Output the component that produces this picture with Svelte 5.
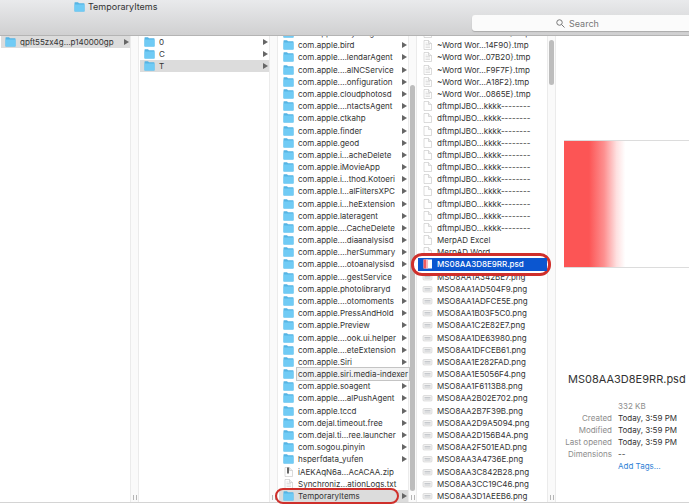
<script lang="ts">
	type Kind = 'folder' | 'text' | 'blank' | 'image' | 'psd' | 'zip';
	type Item = { name: string; kind: Kind; state?: string; ring?: string; tip?: string };

	const make = (kind: Kind, names: string[]): Item[] => names.map((name) => ({ name, kind }));

	const root: Item[] = [{ name: 'qpft55zx4g…p140000gp', kind: 'folder', state: 'path' }];

	const groups: Item[] = [
		...make('folder', ['0', 'C']),
		{ name: 'T', kind: 'folder', state: 'path' }
	];

	const caches: Item[] = [
		...make('folder', [
			'com.apple.…ayUIAgent',
			'com.apple.bird',
			'com.apple.…lendarAgent',
			'com.apple.…alNCService',
			'com.apple.…onfiguration',
			'com.apple.cloudphotosd',
			'com.apple.…ntactsAgent',
			'com.apple.ctkahp',
			'com.apple.finder',
			'com.apple.geod',
			'com.apple.i…acheDelete',
			'com.apple.iMovieApp',
			'com.apple.i…thod.Kotoeri',
			'com.apple.I…alFiltersXPC',
			'com.apple.i…heExtension',
			'com.apple.lateragent',
			'com.apple.…CacheDelete',
			'com.apple.…diaanalysisd',
			'com.apple.…herSummary',
			'com.apple.…otoanalysisd',
			'com.apple.…gestService',
			'com.apple.photolibraryd',
			'com.apple.…otomoments',
			'com.apple.PressAndHold',
			'com.apple.Preview',
			'com.apple.…ook.ui.helper',
			'com.apple.…eteExtension',
			'com.apple.Siri'
		]),
		{ name: '', kind: 'folder', tip: 'com.apple.siri.media-indexer' },
		...make('folder', [
			'com.apple.soagent',
			'com.apple.…alPushAgent',
			'com.apple.tccd',
			'com.dejal.timeout.free',
			'com.dejal.ti…ree.launcher',
			'com.sogou.pinyin',
			'hsperfdata_yufen'
		]),
		{ name: 'iAEKAqN6a…AcACAA.zip', kind: 'zip' },
		{ name: 'Synchroniz…ationLogs.txt', kind: 'text' },
		{ name: 'TemporaryItems', kind: 'folder', state: 'path', ring: 'folder-ring' }
	];

	const files: Item[] = [
		...make('text', [
			'~Word Wor…0D3A1}.tmp',
			'~Word Wor…14F90}.tmp',
			'~Word Wor…07B20}.tmp',
			'~Word Wor…F9F7F}.tmp',
			'~Word Wor…A18F2}.tmp',
			'~Word Wor…0865E}.tmp'
		]),
		...make('blank', Array(11).fill('dftmpIJBO…kkkk--------')),
		...make('blank', ['MerpAD Excel', 'MerpAD Word']),
		{ name: 'MS08AA3D8E9RR.psd', kind: 'psd', state: 'selected', ring: 'file-ring' },
		...make('image', [
			'MSO8AA1A342BE7.png',
			'MSO8AA1AD504F9.png',
			'MSO8AA1ADFCE5E.png',
			'MSO8AA1B03F5C0.png',
			'MSO8AA1C2E82E7.png',
			'MSO8AA1DE63980.png',
			'MSO8AA1DFCEB61.png',
			'MSO8AA1E282FAD.png',
			'MSO8AA1E5056F4.png',
			'MSO8AA1F6113B8.png',
			'MSO8AA2B02E702.png',
			'MSO8AA2B7F39B.png',
			'MSO8AA2D9A5094.png',
			'MSO8AA2D156B4A.png',
			'MSO8AA2F501EAD.png',
			'MSO8AA3A4736E.png',
			'MSO8AA3C842B28.png',
			'MSO8AA3CC19C46.png',
			'MSO8AA3D1AEEB6.png'
		])
	];

	const columns = [
		{ items: root, long: false, thumb: '' },
		{ items: groups, long: false, thumb: '' },
		{ items: caches, long: true, thumb: 'low' },
		{ items: files, long: true, thumb: 'high' }
	];

	const details = [
		['', '332 KB'],
		['Created', 'Today, 3:59 PM'],
		['Modified', 'Today, 3:59 PM'],
		['Last opened', 'Today, 3:59 PM'],
		['Dimensions', '--']
	];
</script>

{#snippet icon(kind: Kind)}
	<svg class="icon" viewBox="0 0 22 20" aria-hidden="true">
		{#if kind === 'folder'}
			<path d="M1 1.5q0-1 1-1h6l2 2h10q1 0 1 1V18q0 1-1 1H2q-1 0-1-1z" fill="#55b4e4" />
			<path d="M1 5h20v13q0 1-1 1H2q-1 0-1-1z" fill="#70cbf5" />
		{:else if kind === 'image'}
			<rect x="2" y="5" width="18" height="11" rx="2" fill="#f1f1f1" stroke="#c4c4c4" />
			<path d="M5 9h12M5 12h12" stroke="#c6c9cd" stroke-width="2" />
		{:else if kind === 'psd'}
			<rect x="3" y="1" width="17" height="18" fill="#fff" />
			<rect x="3" y="1" width="5" height="18" fill="#f25a60" />
			<rect x="8" y="1" width="4" height="18" fill="#f9b4ba" />
		{:else}
			<path d="M4 1h9l6 6v12H4z" fill="#fefefe" stroke="#b9b9b9" />
			<path d="M13 1v6h6" fill="#eee" stroke="#b9b9b9" />
			{#if kind === 'text'}
				<path d="M7 6h4M7 9h9M7 12h9M7 15h9" stroke="#c5c5c5" />
			{:else if kind === 'zip'}
				<path d="M10 1v12" stroke="#333" stroke-width="3" />
			{/if}
		{/if}
	</svg>
{/snippet}

<div class="finder">
	<header>
		<h1>{@render icon('folder')}TemporaryItems</h1>
		<label class="search">
			<svg viewBox="0 0 18 18" aria-hidden="true">
				<circle cx="7" cy="7" r="5.5" />
				<path d="M11 11l6 6" />
			</svg>
			<input type="search" placeholder="Search" aria-label="Search" />
		</label>
	</header>

	<main>
		{#each columns as column}
			<section class="column">
				<ul class:long={column.long}>
					{#each column.items as item}
						<li>
							{#if item.ring}<span class="ring {item.ring}"></span>{/if}
							<button class={item.state} aria-label={item.tip}>
								{@render icon(item.kind)}
								<span class="name">{item.name}</span>
								{#if item.kind === 'folder'}
									<svg class="arrow" viewBox="0 0 5 6" aria-hidden="true"><path d="M0 0l5 3-5 3z" /></svg>
								{/if}
							</button>
							{#if item.tip}<span class="tooltip">{item.tip}</span>{/if}
						</li>
					{/each}
				</ul>
				<div class="gutter">
					{#if column.thumb}<span class="thumb {column.thumb}"></span>{/if}
					<span class="grip"></span>
				</div>
			</section>
		{/each}

		<aside>
			<div class="preview"></div>
			<h2>MS08AA3D8E9RR.psd</h2>
			<dl>
				{#each details as [label, value]}
					<dt>{label}</dt>
					<dd class:size={!label}>{value}</dd>
				{/each}
				<dt></dt>
				<dd><a href="#tags">Add Tags…</a></dd>
			</dl>
		</aside>
	</main>
</div>

<style>
	.finder {
		display: flex;
		flex-direction: column;
		height: 100vh;
		overflow: hidden;
		background: #fff;
		color: #333;
		font-family: Inter, 'Liberation Sans', sans-serif;
		font-size: 8px;
	}

	header {
		position: relative;
		z-index: 2;
		flex: none;
		display: flex;
		justify-content: space-between;
		box-sizing: border-box;
		height: 36px;
		padding-left: 74px;
		background: linear-gradient(#e9eaec, #d0d0d1);
		border-bottom: 1px solid #b4b4b4;
	}

	h1 {
		display: flex;
		align-items: center;
		gap: 3px;
		height: 13px;
		margin: 0;
		font-size: 9px;
		font-weight: 400;
	}

	.search {
		display: flex;
		align-items: center;
		gap: 4px;
		box-sizing: border-box;
		width: 217px;
		height: 16px;
		margin-top: 15px;
		padding-left: 84px;
		background: #fbfbfb;
		border-radius: 3px 0 0 3px;
		box-shadow: 0 1px 1px #aaa;
	}

	.search svg {
		flex: none;
		width: 9px;
		height: 9px;
		fill: none;
		stroke: #777;
		stroke-width: 2;
	}

	.search input {
		min-width: 0;
		flex: 1;
		padding: 0;
		border: 0;
		outline: 0;
		background: none;
		font: inherit;
		font-size: 9px;
	}

	.search input::placeholder {
		color: #777;
	}

	main {
		flex: 1;
		min-height: 0;
		display: grid;
		grid-template-columns: repeat(4, 1fr) 133px;
		grid-template-rows: 100%;
		box-sizing: border-box;
		border-bottom: 1px solid #d4d4d4;
		margin-bottom: 1px;
	}

	.column {
		display: flex;
		min-width: 0;
		min-height: 0;
	}

	ul {
		flex: 1;
		min-width: 0;
		display: grid;
		grid-template-columns: minmax(0, 1fr);
		grid-auto-rows: 12px;
		align-content: start;
		margin: 0;
		padding: 0 0 0 1px;
		list-style: none;
	}

	/* scrolled lists share the full height, with the first row tucked under the toolbar */
	ul.long {
		grid-auto-rows: 1fr;
		align-content: stretch;
		margin-top: -9px;
	}

	li {
		position: relative;
		min-height: 0;
	}

	li:has(.ring) {
		z-index: 1;
	}

	button {
		display: flex;
		align-items: center;
		gap: 4px;
		width: 100%;
		height: 100%;
		padding: 0 1px 0 4px;
		border: 0;
		background: none;
		color: inherit;
		font: inherit;
		line-height: 12px;
		text-align: left;
		white-space: nowrap;
	}

	.path {
		background: #dcdcdc;
	}

	.selected {
		background: #0b56d0;
		color: #fff;
		font-weight: 500;
	}

	.icon {
		flex: none;
		width: 11px;
		height: 10px;
	}

	.name {
		flex: 1;
		min-width: 0;
	}

	.arrow {
		flex: none;
		width: 5px;
		height: 6px;
		fill: #666;
	}

	.ring {
		position: absolute;
		box-sizing: border-box;
		border: 3px solid #cf2f2b;
		border-radius: 11px;
	}

	.folder-ring {
		inset: -2px 9px -2px -4px;
		border-width: 2px;
	}

	.file-ring {
		z-index: -1;
		inset: -5px -4px -5px -7px;
		background: #fff;
	}

	.tooltip {
		position: absolute;
		z-index: 1;
		top: -1px;
		left: 17px;
		padding: 0 1px;
		border: 1px solid #c4c4c4;
		background: #f3f3f3;
		line-height: 12px;
		white-space: nowrap;
	}

	.gutter {
		flex: none;
		display: flex;
		flex-direction: column;
		align-items: center;
		box-sizing: border-box;
		width: 9px;
		padding: 4px 0 2px;
		background: #fafafa;
		border: solid #ebebeb;
		border-width: 0 1px;
	}

	.thumb {
		width: 5px;
		border-radius: 3px;
		background: #bdbdbd;
	}

	.thumb.low {
		flex: 1;
		margin: 45px 0 4px;
	}

	.thumb.high {
		height: 45px;
	}

	.grip {
		width: 2px;
		height: 5px;
		margin-top: auto;
		border: solid #b5b5b5;
		border-width: 0 1px;
	}

	aside {
		min-width: 0;
		padding: 104px 0 0 8px;
	}

	.preview {
		box-sizing: border-box;
		height: 128px;
		border: solid #dcdcdc;
		border-width: 1px 0;
		background: linear-gradient(90deg, #fc5555 20%, #fd8f8f 32%, #fee0e0 42%, #fff 49%);
	}

	h2 {
		margin: 103px 0 12px 4px;
		font-size: 11px;
		font-weight: 400;
		line-height: 17px;
		white-space: nowrap;
	}

	dl {
		display: grid;
		grid-template-columns: 48px 1fr;
		grid-auto-rows: 1fr;
		column-gap: 6px;
		height: 70px;
		margin: 0;
		line-height: 12px;
		white-space: nowrap;
	}

	dt {
		display: flex;
		justify-content: flex-end;
		color: #8c8c8c;
	}

	dd {
		margin: 0;
	}

	.size {
		color: #8c8c8c;
	}

	a {
		color: #2f82d6;
		text-decoration: none;
	}
</style>
